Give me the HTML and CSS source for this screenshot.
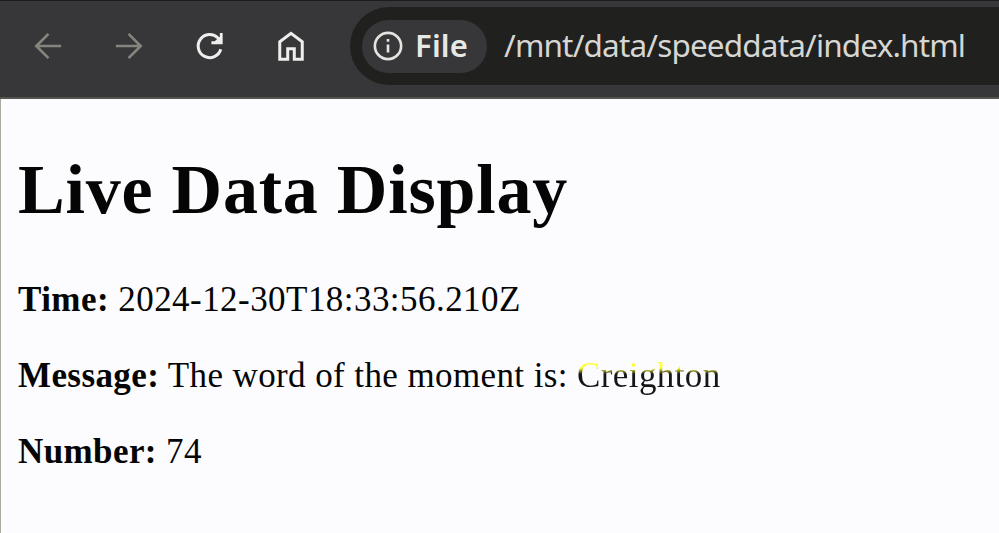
FILE: index.html
```html
<!DOCTYPE html>
<html lang="en">
<head>
<meta charset="utf-8">
<title>Live Data Display</title>
<link rel="stylesheet" href="styles.css">
</head>
<body>
<header class="toolbar">
  <nav class="nav">
    <svg class="icon dim" viewBox="0 0 32 32"><path d="M30 16H4M16.500 3L3.500 16L16.500 29"/></svg>
    <svg class="icon dim" viewBox="0 0 32 32"><path d="M2 16H28M15.500 3L28.500 16L15.500 29"/></svg>
    <svg class="icon" viewBox="0 0 32 32"><path d="M27.500 19.500A12.300 12.300 0 1 1 24.500 7.500L28 11"/><path class="fill" d="M29.500 2V14H17.500V11H21L26.500 6V2Z"/></svg>
    <svg class="icon" viewBox="0 0 32 32"><path d="M4 30V11.500L16 2.500L28 11.500V30H19.500V19H12.500V30Z"/></svg>
  </nav>
  <div class="address">
    <div class="chip">
      <svg class="info" viewBox="0 0 32 32"><circle cx="16" cy="16" r="14"/><path d="M16 14.500V23M16 8.500V11.500"/></svg>
      <span class="scheme">File</span>
    </div>
    <span class="url">/mnt/data/speeddata/index.html</span>
  </div>
</header>
<main class="page">
  <h1>Live Data Display</h1>
  <p class="time"><strong>Time:</strong> 2024-12-30T18:33:56.210Z</p>
  <p><strong>Message:</strong> The word of the moment is: <span class="word">Creighton</span></p>
  <p><strong>Number:</strong> 74</p>
</main>
</body>
</html>
```
FILE: styles.css
```css
* { box-sizing: border-box; }
body { margin: 0; height: 533px; overflow: hidden; background: #fcfcfe; display: flex; flex-direction: column; }
.toolbar { height: 99px; flex: none; display: flex; align-items: flex-start; background: #37373a; border-top: 1px solid #1c1c1c; border-bottom: 2px solid #55554f; }
.nav { display: flex; gap: 51px; padding: 29px 0 0 33px; width: 350px; flex: none; }
.icon { width: 30px; height: 32px; flex: none; fill: none; stroke: #eeeeec; stroke-width: 3.200; }
.dim { stroke: #85857e; stroke-width: 2.800; }
.fill { fill: #eeeeec; stroke: none; }
.address { flex: 1; height: 78px; margin-top: 6px; padding-left: 12px; display: flex; align-items: center; background: #20201f; border-radius: 39px 0 0 39px; font-family: "Noto Sans", sans-serif; white-space: nowrap; }
.chip { width: 125px; height: 53px; border-radius: 27px; background: #373739; display: flex; align-items: center; padding-left: 11px; gap: 12px; }
.info { width: 30px; height: 30px; fill: none; stroke: #e4e4e0; stroke-width: 2.800; }
.scheme { font-size: 31px; font-weight: 600; letter-spacing: 0.2px; color: #e8e8e4; padding-bottom: 3px; }
.url { margin-left: 17px; font-size: 31.5px; letter-spacing: -0.84px; color: #d6d6d2; padding-bottom: 3px; }
.page { flex: 1; padding-left: 17px; border-left: 1px solid #aaaaa0; color: #050505; font-family: "Liberation Serif", serif; }
h1 { margin: 51px 0 0; font-size: 70px; line-height: 80px; letter-spacing: 0.78px; }
p { margin: 0; font-size: 35px; line-height: 40px; letter-spacing: 0.4px; }
.time { margin-top: 50px; letter-spacing: 0.45px; }
p + p { margin-top: 36px; }
.word { color: transparent; background: linear-gradient(#ffff38 12px, #161616 18px); background-clip: text; -webkit-background-clip: text; }
```
